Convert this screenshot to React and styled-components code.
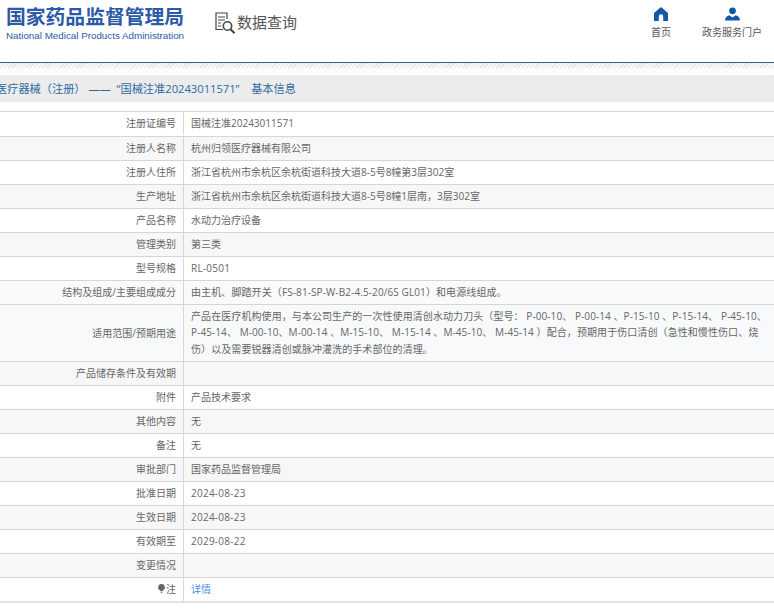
import React from "react";
import styled, { createGlobalStyle } from "styled-components";

const Global = createGlobalStyle`
  html, body { margin: 0; padding: 0; background: #fff; overflow: hidden; }
  body { font-family: "Open Sans", "Noto Sans CJK SC", sans-serif; font-size: 10px; color: #666; }
`;
const Page = styled.div`width: 774px; height: 609px; overflow: hidden;`;
const Header = styled.header`
  height: 62px; display: flex; border-bottom: 1px solid #2a6199; box-sizing: content-box;
`;
const Logo = styled.div`
  width: 178px; margin-left: 6px; padding-top: 4px; display: flex; flex-direction: column;
`;
const LogoTitle = styled.div`
  font: 700 19.8px/24px "Noto Sans CJK SC", sans-serif; color: #2b5aa6; white-space: nowrap;
`;
const LogoSub = styled.div`
  font: 400 9.8px/13px "Liberation Sans", sans-serif; color: #2b5aa6; white-space: nowrap; margin-top: 1px;
`;
const QueryTitle = styled.div`
  margin-left: 31px; padding-top: 12px; height: 26px; display: flex; align-items: flex-start;
  font: 400 15px/20px "Noto Sans CJK SC", sans-serif; color: #555;
`;
const Nav = styled.nav`display: flex; margin-left: auto; padding-top: 7px; margin-right: 12px; gap: 31px;`;
const NavItem = styled.div`
  display: flex; flex-direction: column; align-items: center; gap: 4px;
  font: 400 10px/14px "Noto Sans CJK SC", sans-serif; color: #555; min-width: ${p => p.$w}px;
`;
const Hatch = styled.div`
  height: 12px;
  background:
    repeating-linear-gradient(135deg, rgba(215,215,215,.6) 0 1px, transparent 1px 3px) top/100% 5px no-repeat,
    linear-gradient(#f6f6f6, #fff);
`;
const TitleBar = styled.div`
  height: 27px; background: #ececec; display: flex; align-items: center; white-space: pre;
  color: #2a6aa3; font: 400 11.2px/27px "Open Sans", "Noto Sans CJK SC", sans-serif; margin-bottom: 9px;
`;
const TitleText = styled.span`margin-left: -4px;`;
const Table = styled.div`border-top: 1px solid #d6d6d6; border-bottom: 2px solid #e2e2e2;`;
const Row = styled.div`
  display: grid; grid-template-columns: 184px 1fr; min-height: 23px;
  padding-bottom: ${p => p.$first ? 1 : 0}px;
  background: ${p => p.$bg};
  & + & { border-top: 1px solid #d6d6d6; }
`;
const Label = styled.div`
  border-right: 1px solid #d6d6d6; padding: 0 7px 1.5px 0; display: flex;
  align-items: center; justify-content: flex-end; color: #666;
`;
const Value = styled.div`
  padding: 2.5px 0 4px 7px; line-height: 16.5px; min-height: 16.5px;
  color: ${p => p.$link ? "#4a90e2" : "#666"};
  letter-spacing: ${p => p.$track || 0}px;
`;
const Paragraph = styled.div`width: 578px;`;

const HomeIcon = () => (
  <svg width="14" height="14" viewBox="0 0 14 14"><path fill="#1257a8" d="M7 0 14 6V14H9.2V9.4a2.2 2.2 0 0 0-4.4 0V14H0V6Z"/></svg>
);
const UserIcon = () => (
  <svg width="15" height="14" viewBox="0 0 16 14"><circle cx="8" cy="3.6" r="3.6" fill="#1257a8"/><path fill="#1257a8" d="M0 14c0-3.4 2-5.2 4.6-5.8L8 10.6l3.4-2.4C14 8.8 16 10.6 16 14Z"/></svg>
);
const QueryIcon = () => (
  <svg width="22" height="23" viewBox="0 0 22 23" fill="none" stroke="#444">
    <path strokeWidth="1.2" d="M8 17.5H1V1h11v6"/>
    <path strokeWidth="1.2" d="M3 5h7M3 8h7M3 11h3M3 14h3"/>
    <circle cx="12.5" cy="14" r="4.2" strokeWidth="1.6"/>
    <path strokeWidth="2" d="m15.6 17.2 4 4"/>
  </svg>
);
const BulbIcon = () => (
  <svg width="7" height="9" viewBox="0 0 7 9" style={{ marginRight: 1 }}><path fill="#666" d="M3.5 0a3.3 3.3 0 0 1 2 6L4.4 7.2H2.6L1.5 6a3.3 3.3 0 0 1 2-6Z"/><path fill="#888" d="M2.6 7.8h1.8V9H2.6Z"/></svg>
);

const rows = [
  ["注册证编号", "国械注准20243011571", "#fff"],
  ["注册人名称", "杭州归领医疗器械有限公司", "#f7f7f7"],
  ["注册人住所", "浙江省杭州市余杭区余杭街道科技大道8-5号8幢第3层302室", "#fff"],
  ["生产地址", "浙江省杭州市余杭区余杭街道科技大道8-5号8幢1层南，3层302室", "#f7f7f7"],
  ["产品名称", "水动力治疗设备", "#fff"],
  ["管理类别", "第三类", "#f7f7f7"],
  ["型号规格", "RL-0501", "#fff", 0.25],
  ["结构及组成/主要组成成分", "由主机、脚踏开关（FS-81-SP-W-B2-4.5-20/6S GL01）和电源线组成。", "#fafafa", 0.1],
  ["适用范围/预期用途", "产品在医疗机构使用，与本公司生产的一次性使用清创水动力刀头（型号： P-00-10、 P-00-14 、P-15-10 、P-15-14、 P-45-10、 P-45-14、 M-00-10、M-00-14 、M-15-10、 M-15-14 、M-45-10、 M-45-14 ）配合，预期用于伤口清创（急性和慢性伤口、烧伤）以及需要锐器清创或脉冲灌洗的手术部位的清理。", "#f8f9fb", 0.08],
  ["产品储存条件及有效期", "", "#f7f7f7"],
  ["附件", "产品技术要求", "#fff"],
  ["其他内容", "无", "#f7f7f7"],
  ["备注", "无", "#fff"],
  ["审批部门", "国家药品监督管理局", "#f7f7f7"],
  ["批准日期", "2024-08-23", "#fff", 0.25],
  ["生效日期", "2024-08-23", "#f7f7f7", 0.25],
  ["有效期至", "2029-08-22", "#fff", 0.25],
  ["变更情况", "", "#f7f7f7"],
];

export default function App() {
  return (
    <Page>
      <Global />
      <Header>
        <Logo>
          <LogoTitle>国家药品监督管理局</LogoTitle>
          <LogoSub>National Medical Products Administration</LogoSub>
        </Logo>
        <QueryTitle><QueryIcon />数据查询</QueryTitle>
        <Nav>
          <NavItem $w={20}><HomeIcon />首页</NavItem>
          <NavItem $w={60}><UserIcon />政务服务门户</NavItem>
        </Nav>
      </Header>
      <Hatch />
      <TitleBar><TitleText>医疗器械（注册） ——  “国械注准20243011571”    基本信息</TitleText></TitleBar>
      <Table>
        {rows.map(([l, v, bg, track], i) => (
          <Row key={l} $bg={bg} $first={i === 0}>
            <Label>{l}</Label>
            <Value $track={track}><Paragraph>{v}</Paragraph></Value>
          </Row>
        ))}
        <Row $bg="#fff">
          <Label><BulbIcon />注</Label>
          <Value $link>详情</Value>
        </Row>
      </Table>
    </Page>
  );
}
